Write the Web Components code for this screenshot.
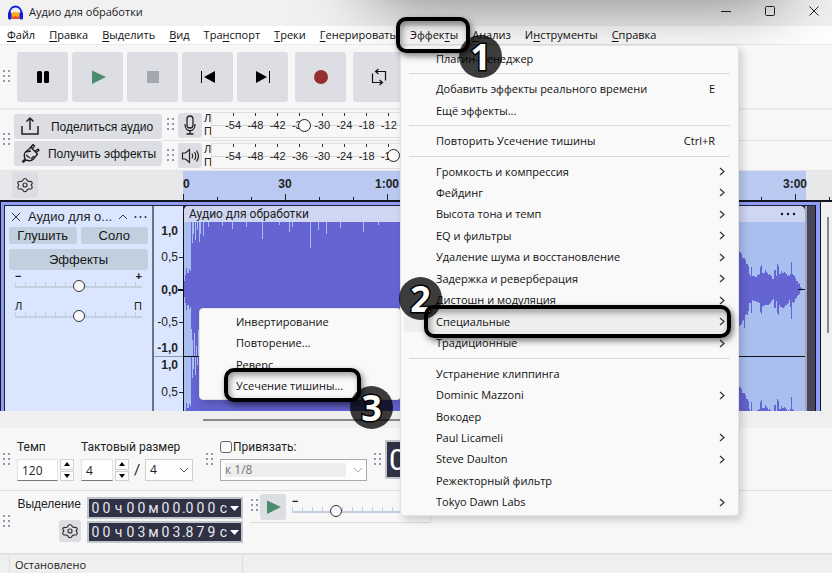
<!DOCTYPE html>
<html lang="ru">
<head>
<meta charset="utf-8">
<title>Аудио для обработки</title>
<style>
  html, body { margin: 0; height: 100%; overflow: hidden; }
  body { background: #f7f7f7; color: #111; font: 11px/16px "Open Sans", "Noto Sans", sans-serif; }
</style>
</head>
<body>
<aud-app></aud-app>
<script>
const BASE = `:host,*{box-sizing:border-box}button,input,select{font:inherit;color:inherit;margin:0;padding:0;border:0;border-radius:0;background:none}`;
function define(name, html, setup) {
  const tpl = document.createElement('template');
  customElements.define(name, class extends HTMLElement {
    connectedCallback() {
      if (this.shadowRoot) return;
      tpl.innerHTML = '<style>' + BASE + '</style>' + (typeof html === 'function' ? html(this) : html);
      this.attachShadow({ mode: 'open' }).append(tpl.content.cloneNode(true));
      if (setup) setup(this, this.shadowRoot);
    }
  });
}
const attr = (el, n, d = '') => el.getAttribute(n) ?? d;

const ICONS = {
  pause: '<rect x="14" y="15" width="5" height="12" rx="1.5"/><rect x="21" y="15" width="5" height="12" rx="1.5"/>',
  play: '<path d="M14 14.500L28 21L14 28Z" fill="#4a8c6d"/>',
  stop: '<rect x="14" y="15" width="12" height="12" fill="#a2a7b0"/>',
  start: '<path d="M13 15v12h1V15zM27 15v12L16 21Z"/>',
  end: '<path d="M26 15v12h1V15zM13 15v12L24 21Z"/>',
  record: '<circle cx="20" cy="21" r="7" fill="#952f2f"/>',
  loop: '<path d="M13.500 17.500V26.500H23M20.500 24l3 2.500-3 2.500M26.500 24.500V15.500H17M19.500 13l-3 2.500 3 2.500" fill="none" stroke="#111" stroke-width="1.200"/>',
  share: '<path d="M12 20v8h16v-8M20 24V12M16.500 15.500L20 12l3.500 3.500" fill="none" stroke="#222" stroke-width="1.500"/>',
  plug: '<path d="M12 29l3-3c-1-3-1-6 1-7.500l5-4 6.500 6.500-4 5c-2 2-5 2-7.500 1l-3 2.500M20 15l3-3.500 1.500 1.500-2.500 3M25.500 19.500l3.500-2-1-1.500-3 2M15 19l6-1M24 23l-3 3M16 22l4 3" fill="none" stroke="#222" stroke-width="1.400" stroke-linejoin="round"/>',
  mic: '<rect x="17" y="12" width="6" height="12" rx="3" fill="none" stroke="#222" stroke-width="1.300"/><path d="M15 20c0 9 10 9 10 0M20 27v3M16.500 30h7" fill="none" stroke="#222" stroke-width="1.300"/>',
  speaker: '<path d="M12.500 18h3l4-3.500v13L15.500 24h-3zM22 18.500q1.500 2.500 0 5M24.500 17q2.500 4 0 8M26.500 15.500q4 5.500 0 11" fill="none" stroke="#222" stroke-width="1.200"/>',
  gear: '<path d="M20 14.500c2 0 1.500 2 3 2.700s3-.7 4 1-.8 2-.8 2.800 1.800 1.500.8 3.200-2.500.2-4 1-1 2.500-3 2.500-1.500-1.700-3-2.500-3 .7-4-1 .8-2.200.8-3.200-1.800-1.300-.8-2.800 2.500-.2 4-1 1-2.700 3-2.700z" fill="none" stroke="#333" stroke-width="1.200"/><circle cx="20" cy="21" r="2" fill="none" stroke="#333" stroke-width="1.200"/>'
};

define('aud-icon', el => `<style>:host{display:block;width:40px;height:42px;flex:none}svg{display:block}</style>
<svg width="40" height="42" viewBox="0 0 40 42" fill="#000">${ICONS[attr(el, 'name')]}</svg>`);

define('aud-grip', `<style>:host{display:block;width:8px;height:14px;flex:none}svg{display:block}</style>
<svg width="8" height="14" fill="#9896ae"><path d="M0 0h2v2H0zM5 0h2v2H5zM0 5h2v2H0zM5 5h2v2H5zM0 10h2v2H0zM5 10h2v2H5z"/></svg>`);

define('aud-button', el => `<style>
:host{display:flex;min-height:0}
button{flex:1;display:flex;align-items:center;justify-content:center;overflow:hidden;background:var(--face,#dcdee4);border-radius:3px;font:12px/16px "Liberation Sans",Arial,sans-serif;font-size:var(--size,12px);color:#161616}
</style><button type="button" aria-label="${attr(el, 'label')}"><slot></slot></button>`);

define('aud-titlebar', `<style>
:host{display:flex;align-items:center;height:26px;padding-left:7px;background:#f1f1f1;color:#222}
svg{display:block;flex:none}
h1{margin:0 0 2px 5px;flex:1;font:11px/16px "Open Sans",sans-serif}
button{display:flex;width:44px;height:26px;padding:0 12px 3px 0;align-items:center;justify-content:flex-end}
.win{display:flex}
</style>
<svg width="17" height="16" viewBox="0 0 17 16"><path d="M4 10q0-3 4.500-3t4.500 3v1q-1.500 3-4.500 3T4 11z" fill="#ffae1a"/><path d="M4 12.500l2-1.500 1 1.500 1.500-2 1.500 2 1-1.500 2 1.500-1 1.500H5z" fill="#f04a1a"/><path d="M2.500 9C2 -1 15 -1 14.500 9" fill="none" stroke="#2227d8" stroke-width="1.800"/><rect x="1" y="7" width="3.500" height="7.500" rx="1.500" fill="#1518dd"/><rect x="12.500" y="7" width="3.500" height="7.500" rx="1.500" fill="#1518dd"/></svg>
<h1>Аудио для обработки</h1>
<div class="win">
<button type="button" aria-label="Свернуть"><svg width="11" height="11"><path d="M0 5.500h10" stroke="#222"/></svg></button>
<button type="button" aria-label="Развернуть"><svg width="11" height="11"><rect x=".5" y=".5" width="9" height="9" rx="1" fill="none" stroke="#222"/></svg></button>
<button type="button" aria-label="Закрыть"><svg width="11" height="11"><path d="M.5 .5l9 9M9.500 .5l-9 9" stroke="#222"/></svg></button>
</div>`);

define('aud-menubar', `<style>
:host{display:block;background:#fff;border-bottom:1px solid #ececec}
nav{display:flex;height:18px;padding-left:7px;gap:14px}
button{line-height:18px;white-space:nowrap}
u{text-underline-offset:2px}
</style><nav>
<button><u>Ф</u>айл</button><button><u>П</u>равка</button><button><u>В</u>ыделить</button><button><u>В</u>ид</button><button>Тра<u>н</u>спорт</button><button><u>Т</u>реки</button><button><u>Г</u>енерировать</button><button>Эффек<u>т</u>ы</button><button><u>А</u>нализ</button><button>И<u>н</u>струменты</button><button><u>С</u>правка</button></nav>`);

define('aud-transport', `<style>
:host{display:flex;align-items:center;gap:6px;padding:7px 3px 6px;border-bottom:2px solid #e9e9e9}
.row{display:flex;gap:4px}
aud-button{width:51px;height:50px}
.gap{margin-left:3px}
</style><aud-grip></aud-grip><div class="row">
<aud-button label="Пауза"><aud-icon name="pause"></aud-icon></aud-button>
<aud-button label="Воспроизвести"><aud-icon name="play"></aud-icon></aud-button>
<aud-button label="Остановить"><aud-icon name="stop"></aud-icon></aud-button>
<aud-button label="В начало"><aud-icon name="start"></aud-icon></aud-button>
<aud-button label="В конец"><aud-icon name="end"></aud-icon></aud-button>
<aud-button class="gap" label="Запись"><aud-icon name="record"></aud-icon></aud-button>
<aud-button class="gap" label="Цикл"><aud-icon name="loop"></aud-icon></aud-button></div>`);

define('aud-meter', el => `<style>
:host{display:flex;align-items:center;height:30px;padding-left:5px;font:12px/14px "Liberation Sans",Arial,sans-serif;color:#222}
aud-button{width:24px;height:25px;margin:0 2px 0 3px}
.lr{width:7px;font-size:11px;line-height:13px}
.lr span{display:block}
.box{flex:1;max-width:500px;position:relative;height:26px;border:1px solid #dedede;border-right:0;background:linear-gradient(#d4d4d4,#d4d4d4) 0 12px/100% 1px no-repeat #f7f7f7}
.scale{display:flex;width:178px;height:24px;margin-left:10px;font-size:11px;text-align:center}
.scale span{flex:1;padding-top:5px;background:linear-gradient(#333,#333) 50% 0/1px 3px no-repeat}
input{position:absolute;inset:0;width:200px;height:24px;appearance:none}
input::-webkit-slider-thumb{appearance:none;width:13px;height:13px;border:1px solid #222;border-radius:50%;background:#fafafa}
</style><aud-grip></aud-grip><aud-button label="${attr(el, 'label')}"><aud-icon name="${attr(el, 'icon')}"></aud-icon></aud-button>
<div class="lr"><span>Л</span><span>П</span></div>
<div class="box"><div class="scale">${[54, 48, 42, 36, 30, 24, 18, 12].map(n => `<span>-${n}</span>`).join('')}</div>
<input type="range" min="0" max="187" value="${attr(el, 'value')}" aria-label="${attr(el, 'label')}"></div>`);

define('aud-share-row', `<style>
:host{display:flex;border-bottom:1px solid #e2e2e2;height:61px}
aud-grip{align-self:center;margin-left:3px}
.col{display:grid;width:148px;grid-template-rows:25px 25px;gap:2px;padding-top:4px;margin:0 0 0 3px}
.col span{flex:1;text-align:center;white-space:nowrap;padding-right:4px}
.col aud-icon{margin:0 -4px 0 -4px}
.meters{flex:1}
aud-meter+aud-meter{border-top:1px solid #e2e2e2}
</style><aud-grip></aud-grip><div class="col">
<aud-button label="Поделиться аудио"><aud-icon name="share"></aud-icon><span>Поделиться аудио</span></aud-button>
<aud-button label="Получить эффекты"><aud-icon name="plug"></aud-icon><span>Получить эффекты</span></aud-button></div>
<div class="meters"><aud-meter icon="mic" label="Уровень записи" value="86"></aud-meter><aud-meter icon="speaker" label="Уровень воспроизведения" value="175"></aud-meter></div>`);

define('aud-timeline', `<style>
:host{display:flex;height:31px;background:#e8e8eb;border-bottom:2px solid #151522}
.left{width:183px;flex:none;padding:1px 0 0 12px}
aud-button{width:26px;height:26px}
.scale{flex:1;display:flex;font:bold 12px/27px "Liberation Sans",Arial,sans-serif;color:#222;overflow:hidden;
 background:repeating-linear-gradient(90deg,#222 0 1px,transparent 1px 102px) 0 100%/100% 6px no-repeat,repeating-linear-gradient(90deg,#222 0 1px,transparent 1px 34px) 0 100%/100% 3px no-repeat,linear-gradient(90deg,#b9c9f1 623px,#e8e8eb 623px)}
span{width:102px;flex:none;text-align:center}
span:first-child{width:51px;text-align:left}
</style><div class="left"><aud-button label="Параметры шкалы"><aud-icon name="gear"></aud-icon></aud-button></div>
<div class="scale"><span>0</span><span>30</span><span>1:00</span><span>1:30</span><span>2:00</span><span>2:30</span><span>3:00</span></div>`);

define('aud-slider', el => `<style>
:host{display:block;font:bold 11px/8px "Liberation Sans",Arial,sans-serif}
.ends{display:flex;justify-content:space-between}
input{display:block;width:100%;height:12px;appearance:none;background:linear-gradient(#c1cfdf,#c1cfdf) 0 6px/100% 2px no-repeat,repeating-linear-gradient(90deg,#c1cfdf 0 1px,transparent 1px 10px) 0 2px/100% 5px no-repeat}
input::-webkit-slider-thumb{appearance:none;width:12px;height:12px;border:1px solid #333;border-radius:50%;background:#fafafa}
</style><div class="ends"><span>${attr(el, 'lo')}</span><span>${attr(el, 'hi')}</span></div>
<input type="range" value="${attr(el, 'value', '50')}" aria-label="${attr(el, 'label')}">`);

define('aud-track-panel', `<style>
:host{display:flex;flex-direction:column;gap:2px;padding:3px 4px 0;background:#dae6ff;font:13px/16px "Liberation Sans",Arial,sans-serif;color:#222}
.head{display:flex;align-items:center;height:16px;padding:0 0 0 2px}
.head b{flex:1;font-weight:400;padding-left:7px;white-space:nowrap}
.head button{display:flex}
.row{display:grid;grid-template-columns:1fr 1fr;gap:4px}
aud-button{height:17px;--face:#c1cfdf;--size:13px}
.fx{height:21px;margin-top:3px}
aud-slider{padding:0 6px}
.pan{padding-top:8px;font-weight:400}
</style><div class="head"><button aria-label="Закрыть дорожку"><svg width="10" height="10"><path d="M1 1l8 8M9 1l-8 8" stroke="#333"/></svg></button><b>Аудио для о...</b>
<button aria-label="Свернуть дорожку"><svg width="10" height="6"><path d="M1 5l4-4 4 4" fill="none" stroke="#333"/></svg></button>
<button aria-label="Меню дорожки" style="margin:0 1px 0 6px"><svg width="13" height="4" fill="#333"><circle cx="1.500" cy="2" r="1"/><circle cx="6.500" cy="2" r="1"/><circle cx="11.500" cy="2" r="1"/></svg></button></div>
<div class="row"><aud-button label="Глушить">Глушить</aud-button><aud-button label="Соло">Соло</aud-button></div>
<aud-button class="fx" label="Эффекты">Эффекты</aud-button>
<aud-slider lo="−" hi="+" label="Громкость"></aud-slider><aud-slider class="pan" lo="Л" hi="П" label="Панорама"></aud-slider>`);

function wave() {
  let seed = 7;
  const rnd = () => (seed = (seed * 16807) % 2147483647) / 2147483647;
  const dips = { 8: 21, 9: 12, 11: 18, 13: 8, 15: 20, 16: 12, 19: 14, 24: 5, 38: 4, 48: 7, 62: 5, 78: 17, 95: 3, 105: 10, 108: 5, 126: 26, 134: 8, 142: 12, 156: 6, 179: 10, 194: 3 };
  let up = [], down = [];
  for (let x = 0; x < 621; x++) {
    let a, b;
    if (x < 7) { a = b = x < 1 ? 8 : 14 + rnd() * 8; }
    else if (x < 540) { a = 67 - (dips[x] || 0); b = 67 - (dips[x + 1] || 0) * 1.3; }
    else {
      const t = x - 556;
      const env = t < 9 ? 34 - t * 1.6 : t < 50 ? 13 + 3 * Math.sin(t / 3) : Math.max(0, 15 - (t - 50) * 1.3);
      const spike = { 4: 12, 11: 12, 20: 9, 21: 8, 34: 9, 35: 8, 37: 12, 38: 11, 51: 16 }[t] || 0;
      a = env + spike * (t > 8 ? .8 : .2) + (env > 3 ? rnd() * 3 : 0);
      b = env + spike * .9 + (env > 3 ? rnd() * 3 : 0);
    }
    up.push(a); down.push(b);
  }
  const shape = c => 'M0 ' + c + up.map((a, i) => `L${i} ${(c - a).toFixed(1)}H${i + 1}`).join('') + down.map((b, i) => [i, b]).reverse().map(([i, b]) => `L${i + 1} ${(c + b).toFixed(1)}H${i}`).join('') + 'Z';
  return `<path d="${shape(67)}"/><path d="${shape(202)}"/>`;
}

define('aud-clip', () => `<style>
:host{display:flex;flex-direction:column;background:#a9bff0;overflow:hidden;border-radius:5px 5px 0 0;border-left:1px solid #111}
header{display:flex;align-items:center;height:16px;flex:none;padding:0 8px 0 5px;background:#cfd6f2;font:12px/16px Roboto,sans-serif;color:#222}
header span{flex:1}
header button{display:flex}
.wave{flex:1;min-height:0;position:relative;overflow:hidden}
svg.w{display:block;width:100%;height:269px}
</style><header><span>Аудио для обработки</span><button aria-label="Меню клипа"><svg width="17" height="4" fill="#111"><circle cx="2" cy="2" r="1.200"/><circle cx="8" cy="2" r="1.200"/><circle cx="14" cy="2" r="1.200"/></svg></button></header>
<div class="wave"><svg class="w" viewBox="0 0 621 269" preserveAspectRatio="none" fill="#6464d2" shape-rendering="crispEdges">${wave()}<path d="M0 134h621v1H0zM614 67h7v1h-7z" fill="#111"/></svg></div>`);

define('aud-track', `<style>
:host{display:flex;background:#efefef;min-height:0}
.frame{flex:1;min-width:0;display:flex;border:solid #8f9cf5;border-width:3px 4px 0 3px;outline:1px solid #15151f;margin:0 0 0 1px;background:#222433;padding:1px 0 0 1px}
aud-track-panel{width:147px;flex:none}
.amp{width:31px;flex:none;display:flex;flex-direction:column;border-left:2px solid #67757f;background:linear-gradient(#8a9aaa,#8a9aaa) 0 150px/100% 1px no-repeat #dae6ff;font:12px/14px "Liberation Sans",Arial,sans-serif;text-align:right;color:#222}
.amp span{padding-right:5px;background:linear-gradient(#222,#222) 100% 50%/4px 1px no-repeat}
.amp b{padding-right:5px}
.amp .z{background:linear-gradient(#111,#111) 100% 50%/5px 2px no-repeat}
.amp>*{display:block;flex:none}
aud-clip{flex:1;min-width:0}
.after{width:11px;flex:none;background:#46455c;border-left:2px solid #a5a5ae;border-right:1px solid #111}
.scroll{width:12px;flex:none;padding:15px 0 0 7px}
.scroll i{display:block;width:2px;height:116px;background:#888}
</style><div class="frame"><aud-track-panel></aud-track-panel>
<div class="amp"><b style="margin-top:18px">1,0</b><span style="margin-top:12px">0,5</span><b class="z" style="margin-top:19px">0,0</b><span style="margin-top:18px">-0,5</span><b style="margin-top:12px">-1,0</b><b style="margin-top:3px">1,0</b><span style="margin-top:13px">0,5</span></div>
<aud-clip></aud-clip><div class="after"></div></div><div class="scroll"><i></i></div>`);

define('aud-hscroll', `<style>:host{display:block;position:relative;height:17px;background:#efefef;padding:8px 120px 0 203px}i{display:block;height:2px;background:#888}</style><i></i>`);

define('aud-spin', el => `<style>
:host{display:flex;gap:2px}
input{width:var(--w,32px);height:22px;background:#fff;border:1px solid #e4e4e4;border-bottom-color:#777;padding-left:4px;font:12px/16px "Open Sans",sans-serif}
div{display:grid;width:14px;gap:1px}
button{display:flex;align-items:center;justify-content:center;border:1px solid #d0d0d0;background:#fdfdfd}
</style><input value="${attr(el, 'value')}" aria-label="${attr(el, 'label')}"><div>
<button aria-label="Больше"><svg width="6" height="4"><path d="M0 4l3-4 3 4z"/></svg></button><button aria-label="Меньше"><svg width="6" height="4"><path d="M0 0l3 4 3-4z"/></svg></button></div>`);

define('aud-select', el => `<style>
:host{display:block;position:relative}
select{appearance:none;display:block;width:100%;height:22px;padding-left:4px;border:1px solid ${el.hasAttribute('off') ? '#aaa' : '#d0d0d0'};background:#fdfdfd;font:12px/16px "Open Sans",sans-serif;opacity:1}
select:disabled{color:#777;background:linear-gradient(#eee,#eee) 4px 3px/calc(100% - 24px) 14px no-repeat #fdfdfd}
svg{position:absolute;right:4px;top:8px;pointer-events:none}
</style><select aria-label="${attr(el, 'label')}" ${el.hasAttribute('off') ? 'disabled' : ''}><option>${attr(el, 'value')}</option></select>
<svg width="10" height="6"><path d="M1 1l4 4 4-4" fill="none" stroke="${el.hasAttribute('off') ? '#aaa' : '#666'}"/></svg>`);

define('aud-time-field', el => `<style>
:host{display:flex;align-items:center;height:22px;padding-left:1px;border:2px solid #c3c5cc;background:#2f3145;color:#e8e8ee;font:14px/18px Roboto,Arial,sans-serif}
span{width:11px;text-align:center}
.u{width:13px}.dot{width:2px}
button{display:flex;margin-left:auto;padding-right:2px}
</style>${[...attr(el, 'value')].map(c => `<span class="${c === '.' ? 'dot' : /\d/.test(c) ? '' : 'u'}">${c}</span>`).join('')}
<button aria-label="Формат времени"><svg width="9" height="5" fill="#fff"><path d="M0 0h9L4.500 5z"/></svg></button>`);

define('aud-tempo-row', `<style>
:host{display:flex;height:63px;border-bottom:1px solid #dedede;font:12px/16px Roboto,sans-serif;color:#222}
aud-grip{margin:25px 0 0 3px}
.g{padding:11px 0 0 6px;display:grid;align-content:start;gap:4px}
.g+.g{padding-left:7px}
.g>span,label{height:16px;white-space:nowrap}
.c{display:flex;align-items:center}
.c aud-select{width:48px}
.sl{width:16px;text-align:center;font-size:15px}
label{display:flex;align-items:center;gap:1px}
input{appearance:none;width:12px;height:12px;border:1px solid #666;border-radius:3px;background:#fdfdfd}
.big{width:180px;margin:12px 0 11px 3px;padding-left:2px;border:2px solid #c3c5cc;background:#2f3145;color:#fff;font:30px/35px Roboto,Arial,sans-serif}
</style><aud-grip></aud-grip>
<div class="g"><span>Темп</span><aud-spin value="120" label="Темп" style="--w:41px"></aud-spin></div>
<div class="g"><span>Тактовый размер</span><div class="c"><aud-spin value="4" label="Тактовый размер"></aud-spin><span class="sl">/</span><aud-select value="4" label="Длительность"></aud-select></div></div>
<aud-grip style="margin-left:13px"></aud-grip>
<div class="g" style="width:153px"><label><input type="checkbox">Привязать:</label><aud-select off value="к 1/8" label="Шаг привязки"></aud-select></div>
<aud-grip style="margin-left:7px"></aud-grip><div class="big">0</div>`);

define('aud-selection-row', `<style>
:host{display:flex;height:63px;color:#222;border-bottom:1px solid #ddd}
aud-grip{margin:24px 0 0 3px}
.n{width:64px;margin-left:6px;display:flex;flex-direction:column;align-items:flex-end;gap:8px;padding-top:5px;font:12px/16px "Liberation Sans",Arial,sans-serif;white-space:nowrap}
.n aud-button{width:22px;height:22px;flex:none}
.t{width:156px;margin-left:6px;padding-top:6px;display:grid;align-content:start;gap:2px}
.p{width:181px;display:flex;height:32px;border-bottom:1px solid #ddd;border-right:1px solid #ddd;margin-left:7px}
.p aud-grip{margin:8px 0 0 1px}
.p aud-button{width:26px;height:26px;margin:3px 4px 0 1px}
aud-slider{flex:1;padding:6px 2px 0}
</style><aud-grip></aud-grip><div class="n"><span>Выделение</span><aud-button label="Параметры выделения"><aud-icon name="gear"></aud-icon></aud-button></div>
<div class="t"><aud-time-field value="00ч00м00.000с"></aud-time-field><aud-time-field value="00ч03м03.879с"></aud-time-field></div>
<div class="p"><aud-grip></aud-grip><aud-button label="Воспроизвести на скорости"><aud-icon name="play"></aud-icon></aud-button><aud-slider lo="−" value="31" label="Скорость"></aud-slider></div>`);

define('aud-status', `<style>
:host{display:flex;flex:1;background:#efefef;border-top:1px solid #e6e6e6;color:#222}
span{flex:none;width:234px;margin-left:9px;padding-top:2px;padding-left:5px;border:solid #dcdcdc;border-width:0 1px;line-height:16px;white-space:nowrap}
</style><span>Остановлено</span>`);

define('aud-menu', `<style>
:host{display:flex;flex-direction:column;position:absolute;background:#f9f9f9;border:1px solid #e3e3e3;border-radius:4px;padding:2px 3px;box-shadow:3px 4px 8px rgba(0,0,0,.18)}
</style><slot></slot>`);

define('aud-menu-item', el => `<style>
:host{display:flex;flex:1 1 0;min-height:0}
button{flex:1;display:flex;align-items:center;padding:0 10px 0 var(--indent,32px);text-align:left;border-radius:3px;white-space:nowrap}
:host([current]) button{background:#eee}
.label{flex:1}
kbd{font:inherit;padding-right:10px}
</style><button type="button"><span class="label"><slot></slot></span>${el.hasAttribute('key') ? `<kbd>${attr(el, 'key')}</kbd>` : ''}${el.hasAttribute('sub') ? '<svg width="6" height="9"><path d="M1 1l4 3.500-4 3.500" fill="none" stroke="#333" stroke-width="1.200"/></svg>' : ''}</button>`);

define('aud-separator', `<style>:host{display:block;flex:none;height:9px;padding:4px 5px}hr{margin:0;border:0;height:1px;background:#dadada}</style><hr>`);

define('aud-frame', `<style>:host{display:block;position:absolute;border:4px solid #000;border-radius:10px;pointer-events:none;box-shadow:2px 3px 6px rgba(0,0,0,.5),inset 2px 3px 6px rgba(0,0,0,.4)}</style>`);
define('aud-badge', `<style>:host{display:flex;align-items:center;justify-content:center;position:absolute;width:43px;height:43px;border-radius:50%;background:rgba(0,0,0,.76);color:#fff;font:bold 36px/43px "Open Sans",sans-serif;-webkit-text-stroke:3px #000;paint-order:stroke fill;pointer-events:none}</style><slot></slot>`);

define('aud-app', `<style>
:host{display:flex;flex-direction:column;height:100vh;position:relative;overflow:hidden}
.top{position:relative;overflow:hidden;flex:none}
.shade{position:absolute;left:372px;right:50px;top:-100px;height:100px;pointer-events:none;box-shadow:0 0 70px rgba(0,0,0,.52)}
aud-transport,aud-share-row,aud-timeline,aud-hscroll,aud-tempo-row,aud-selection-row{flex:none}
aud-track{flex:0 0 209px}
.main{left:400px;top:45px;width:339px;height:471px}
.subm{left:199px;top:308px;width:202px;height:92px;--indent:33px}
</style>
<div class="top"><aud-titlebar></aud-titlebar><aud-menubar></aud-menubar><div class="shade"></div></div>
<aud-transport></aud-transport><aud-share-row></aud-share-row><aud-timeline></aud-timeline>
<aud-track></aud-track><aud-hscroll></aud-hscroll><aud-tempo-row></aud-tempo-row><aud-selection-row></aud-selection-row><aud-status></aud-status>
<aud-menu class="subm"><aud-menu-item>Инвертирование</aud-menu-item><aud-menu-item>Повторение...</aud-menu-item><aud-menu-item>Реверс</aud-menu-item><aud-menu-item>Усечение тишины...</aud-menu-item></aud-menu>
<aud-menu class="main">
<aud-menu-item>Плагин-менеджер</aud-menu-item><aud-separator></aud-separator>
<aud-menu-item key="E">Добавить эффекты реального времени</aud-menu-item><aud-menu-item>Ещё эффекты...</aud-menu-item><aud-separator></aud-separator>
<aud-menu-item key="Ctrl+R">Повторить Усечение тишины</aud-menu-item><aud-separator></aud-separator>
<aud-menu-item sub>Громкость и компрессия</aud-menu-item><aud-menu-item sub>Фейдинг</aud-menu-item><aud-menu-item sub>Высота тона и темп</aud-menu-item><aud-menu-item sub>EQ и фильтры</aud-menu-item><aud-menu-item sub>Удаление шума и восстановление</aud-menu-item><aud-menu-item sub>Задержка и реверберация</aud-menu-item><aud-menu-item sub>Дистошн и модуляция</aud-menu-item><aud-menu-item sub current>Специальные</aud-menu-item><aud-menu-item sub>Традиционные</aud-menu-item><aud-separator></aud-separator>
<aud-menu-item>Устранение клиппинга</aud-menu-item><aud-menu-item sub>Dominic Mazzoni</aud-menu-item><aud-menu-item>Вокодер</aud-menu-item><aud-menu-item sub>Paul Licameli</aud-menu-item><aud-menu-item sub>Steve Daulton</aud-menu-item><aud-menu-item>Режекторный фильтр</aud-menu-item><aud-menu-item sub>Tokyo Dawn Labs</aud-menu-item>
</aud-menu>
<aud-badge style="left:459px;top:35px">1</aud-badge><aud-badge style="left:399px;top:277px">2</aud-badge><aud-badge style="left:350px;top:386px">3</aud-badge>
<aud-frame style="left:396px;top:17px;width:74px;height:36px"></aud-frame>
<aud-frame style="left:424px;top:305px;width:307px;height:33px"></aud-frame>
<aud-frame style="left:224px;top:368px;width:137px;height:34px"></aud-frame>`);
</script>
</body>
</html>
